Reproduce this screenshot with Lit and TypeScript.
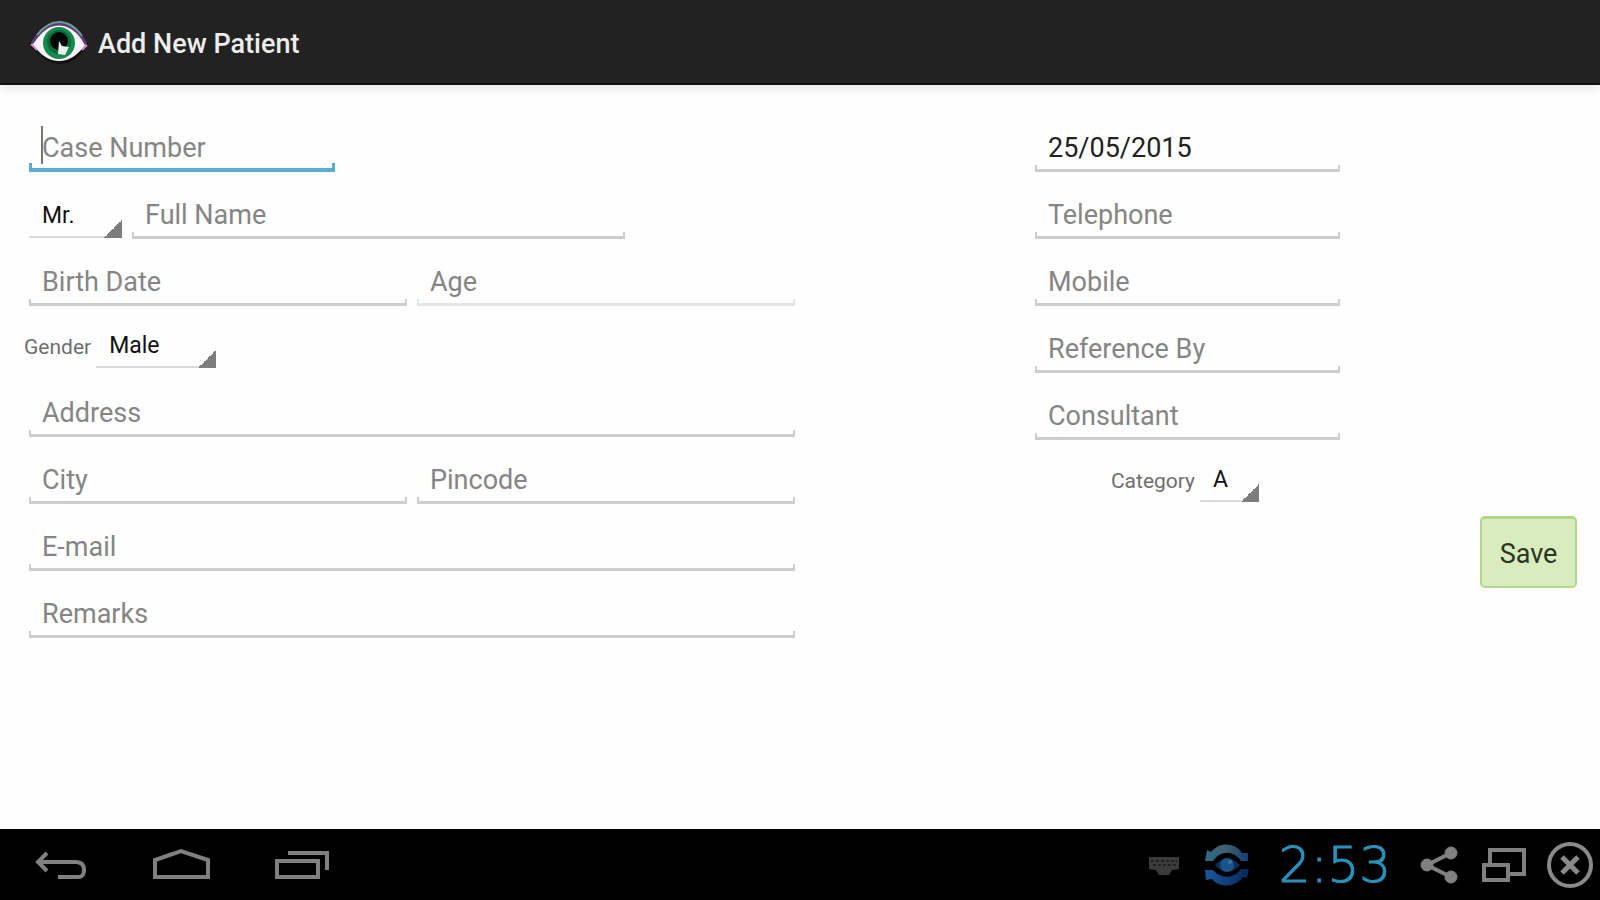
import { LitElement, html, css } from "lit";
import { customElement } from "lit/decorators.js";

@customElement("app-root")
export class AppRoot extends LitElement {
  static styles = css`
    :host {
      display: flex;
      flex-direction: column;
      min-height: 100vh;
      background: #fefefe;
      font-family: Roboto, "Liberation Sans", sans-serif;
      color: #222;
    }
    * {
      box-sizing: border-box;
    }
    svg {
      display: block;
      flex: none;
    }
    .bar {
      display: flex;
      align-items: center;
      gap: 8px;
      height: 85px;
      padding: 2px 28px 0;
      background: #222;
      border-bottom: 2px solid #111;
      box-shadow: 0 2px 12px rgba(0, 0, 0, 0.12);
    }
    .title {
      margin: 0;
      padding-top: 2px;
      font-size: 27px;
      font-weight: 500;
      line-height: 32px;
      color: #ededed;
    }
    .form {
      flex: 1;
      display: grid;
      grid-template-columns: 776fr 230fr 315fr 237fr;
      grid-template-rows: auto 1fr;
      padding: 20px 18px 20px 24px;
    }
    .main {
      grid-column: 1;
      grid-row: 1 / 3;
    }
    .side {
      grid-column: 3;
      grid-row: 1;
    }
    .row {
      display: grid;
      align-items: end;
      height: 67px;
    }
    .row.short {
      display: flex;
      height: 64px;
      padding-bottom: 2px;
    }
    .row.center {
      justify-content: center;
    }
    .case {
      grid-template-columns: 316fr 460fr;
    }
    .name {
      grid-template-columns: 103px 503fr 170fr;
    }
    .half {
      grid-template-columns: 1fr 1fr;
    }
    .field {
      position: relative;
      display: grid;
      margin: 0 5px;
    }
    .input {
      width: 100%;
      min-width: 0;
      height: 50px;
      padding: 1px 13px 0;
      border: 0;
      border-radius: 0;
      outline: 0;
      font: 400 27px/32px Roboto, "Liberation Sans", sans-serif;
      color: #222;
      --line: #cdcdcd;
      background:
        linear-gradient(var(--line), var(--line)) left bottom / 100% 3px no-repeat,
        linear-gradient(var(--line), var(--line)) left bottom / 2px 7px no-repeat,
        linear-gradient(var(--line), var(--line)) right bottom / 2px 7px no-repeat;
    }
    .input::placeholder {
      color: #858585;
      opacity: 1;
    }
    .input.faint {
      --line: #e6e6e6;
    }
    .input.active {
      background:
        linear-gradient(#5aabd3, #5aabd3) left bottom / 100% 4px no-repeat,
        linear-gradient(#5aabd3, #5aabd3) left bottom / 3px 9px no-repeat,
        linear-gradient(#5aabd3, #5aabd3) right bottom / 3px 9px no-repeat;
    }
    .caret {
      position: absolute;
      left: 12px;
      top: 4px;
      width: 2px;
      height: 38px;
      background: #777;
    }
    .select {
      appearance: none;
      height: 46px;
      margin: 0 5px;
      padding: 2px 20px 0 13px;
      border: 0;
      border-radius: 0;
      outline: 0;
      font: 400 23px/28px Roboto, "Liberation Sans", sans-serif;
      color: #111;
      background:
        linear-gradient(135deg, transparent 50%, #7d7d7d 50%) right bottom / 18px 18px no-repeat,
        linear-gradient(#dcdcdc, #dcdcdc) left bottom / 100% 2px no-repeat;
    }
    .name .select {
      margin-bottom: 1px;
    }
    .gender {
      width: 120px;
    }
    .category {
      width: 59px;
    }
    .label {
      padding-bottom: 7px;
      font-size: 21px;
      line-height: 28px;
      color: #6e6e6e;
    }
    .save {
      grid-column: 4;
      grid-row: 2;
      justify-self: end;
      align-self: start;
      width: 97px;
      height: 72px;
      margin: 12px 5px 0;
      padding: 2px 0 0;
      border: 2px solid #b3d688;
      border-top-width: 3px;
      border-radius: 5px;
      background: #d9ecbe;
      font: 400 27px/32px Roboto, "Liberation Sans", sans-serif;
      color: #2c3524;
    }
    .nav {
      display: flex;
      align-items: center;
      justify-content: space-between;
      height: 71px;
      padding: 1px 6px 0 32px;
      background: #000;
    }
    .group {
      display: flex;
      align-items: center;
    }
    .keys {
      gap: 60px;
    }
    .status {
      gap: 24px;
    }
    .key {
      padding: 0;
      border: 0;
      background: none;
    }
    .close {
      margin-left: -4px;
    }
    .clock {
      width: 122px;
      text-align: center;
      font: 200 50px/56px "DejaVu Sans", sans-serif;
      -webkit-text-stroke: 1px #2793bd;
      color: #2793bd;
    }
  `;

  private field(name: string, kind = "") {
    return html`<div class="field">
      <input class="input ${kind}" type="text" aria-label=${name} placeholder=${name} />
    </div>`;
  }

  render() {
    return html`
      <header class="bar">
        <svg width="62" height="46" viewBox="0 0 62 46" aria-hidden="true">
          <path d="M1 24C12 7 21 1 31 1s22 7 29 24C51 38 42 44 32 44S14 39 1 24Z" fill="#111" />
          <path d="M4 24C14 9 22 5 31 5s19 6 27 19C50 35 41 41 31 41S14 36 4 24Z" fill="#f8f3f8" />
          <circle cx="31" cy="23" r="16" fill="#158a4c" />
          <circle cx="31" cy="22" r="12" fill="#0c6b3a" />
          <circle cx="31" cy="21" r="9" fill="#020604" />
          <path d="M31 21l3 5 7 1-4 8-7-1Z" fill="#e4efe8" />
          <path d="M4 23C14 8 22 4 31 4s20 6 27 20" fill="none" stroke="#5b3a78" stroke-width="3" />
          <path d="M9 15C17 5 24 2 31 2s16 4 23 14" fill="none" stroke="#6f9c97" stroke-width="2" />
          <path d="M3 24l6 6M59 25l-5 5" stroke="#d58ad0" stroke-width="2" />
        </svg>
        <h1 class="title">Add New Patient</h1>
      </header>

      <form class="form">
        <div class="main">
          <div class="row case">
            <div class="field">
              <input class="input active" type="text" aria-label="Case Number" placeholder="Case Number" />
              <span class="caret"></span>
            </div>
          </div>
          <div class="row name">
            <select class="select" aria-label="Title">
              <option>Mr.</option>
            </select>
            ${this.field("Full Name")}
          </div>
          <div class="row half">${this.field("Birth Date")}${this.field("Age", "faint")}</div>
          <div class="row short">
            <label class="label" for="gender">Gender</label>
            <select class="select gender" id="gender">
              <option>Male</option>
            </select>
          </div>
          <div class="row">${this.field("Address")}</div>
          <div class="row half">${this.field("City")}${this.field("Pincode")}</div>
          <div class="row">${this.field("E-mail")}</div>
          <div class="row">${this.field("Remarks")}</div>
        </div>

        <div class="side">
          <div class="row">
            <div class="field">
              <input class="input" type="text" aria-label="Date" .value=${"25/05/2015"} />
            </div>
          </div>
          ${["Telephone", "Mobile", "Reference By", "Consultant"].map(
            (name) => html`<div class="row">${this.field(name)}</div>`
          )}
          <div class="row short center">
            <label class="label" for="category">Category</label>
            <select class="select category" id="category">
              <option>A</option>
            </select>
          </div>
        </div>

        <button class="save" type="button">Save</button>
      </form>

      <footer class="nav">
        <div class="group keys">
          <button class="key" aria-label="Back">
            <svg width="60" height="40" viewBox="0 0 60 40" fill="none" stroke="#808080">
              <path d="M8 17H44Q52 17 52 25T44 32H26" stroke-width="4" />
              <path d="M15 8L6 17L15 26" stroke-width="4" />
            </svg>
          </button>
          <button class="key" aria-label="Home">
            <svg width="60" height="40" viewBox="0 0 60 40" fill="none" stroke="#808080" stroke-width="4">
              <path d="M3 32V15L29 6L56 15V32Z" />
            </svg>
          </button>
          <button class="key" aria-label="Recent apps">
            <svg width="60" height="40" viewBox="0 0 60 40" fill="none" stroke="#808080">
              <path d="M5 16H46V32H5Z" stroke-width="4" />
              <path d="M16 8H55V25" stroke-width="4" />
            </svg>
          </button>
        </div>
        <div class="group status">
          <svg width="32" height="22" viewBox="0 0 32 22" aria-hidden="true">
            <path d="M1 3H31V15L24 16L21 21H11L8 16L1 15Z" fill="#3b3b3b" />
            <path d="M3 7H29M5 11H29" stroke="#222" stroke-width="2" stroke-dasharray="3 2" />
          </svg>
          <svg width="46" height="44" viewBox="0 0 46 44" aria-hidden="true">
            <defs>
              <linearGradient id="top" x1="0" x2="1"><stop stop-color="#2d6a86" /><stop offset=".5" stop-color="#3f606e" /><stop offset="1" stop-color="#123d78" /></linearGradient>
              <linearGradient id="low" x1="0" x2="1"><stop stop-color="#17589c" /><stop offset="1" stop-color="#08265a" /></linearGradient>
            </defs>
            <path d="M1 18L3 7L7 9C15 -1 31 -1 38 10L44 10V18H37C30 7 16 7 9 18Z" fill="url(#top)" />
            <path d="M1 27H9C17 36 30 36 37 26H45L43 35L39 34C31 45 15 45 8 36L2 37Z" fill="url(#low)" />
            <path d="M11 22Q23 9 36 22Q23 36 11 22Z" fill="#0b2f5a" />
            <circle cx="23" cy="22" r="7" fill="#185389" />
            <circle cx="26" cy="19" r="2" fill="#3a7799" />
          </svg>
          <time class="clock">2:53</time>
          <button class="key" aria-label="Share">
            <svg width="38" height="38" viewBox="0 0 38 38" fill="#808080" stroke="#808080">
              <path d="M31 7L7 19L31 31" fill="none" stroke-width="4" />
              <circle cx="31" cy="7" r="6" />
              <circle cx="7" cy="19" r="6" />
              <circle cx="31" cy="31" r="6" />
            </svg>
          </button>
          <button class="key" aria-label="Windows">
            <svg width="44" height="36" viewBox="0 0 44 36" fill="none" stroke="#808080" stroke-width="4">
              <path d="M8 17V3H42V27H27" />
              <path d="M2 18H26V33H2Z" />
            </svg>
          </button>
          <button class="key close" aria-label="Close">
            <svg width="48" height="48" viewBox="0 0 48 48" fill="none" stroke="#8a8a8a">
              <circle cx="24" cy="24" r="21" stroke-width="4" />
              <path d="M16 16L32 32M32 16L16 32" stroke-width="5" />
            </svg>
          </button>
        </div>
      </footer>
    `;
  }
}
